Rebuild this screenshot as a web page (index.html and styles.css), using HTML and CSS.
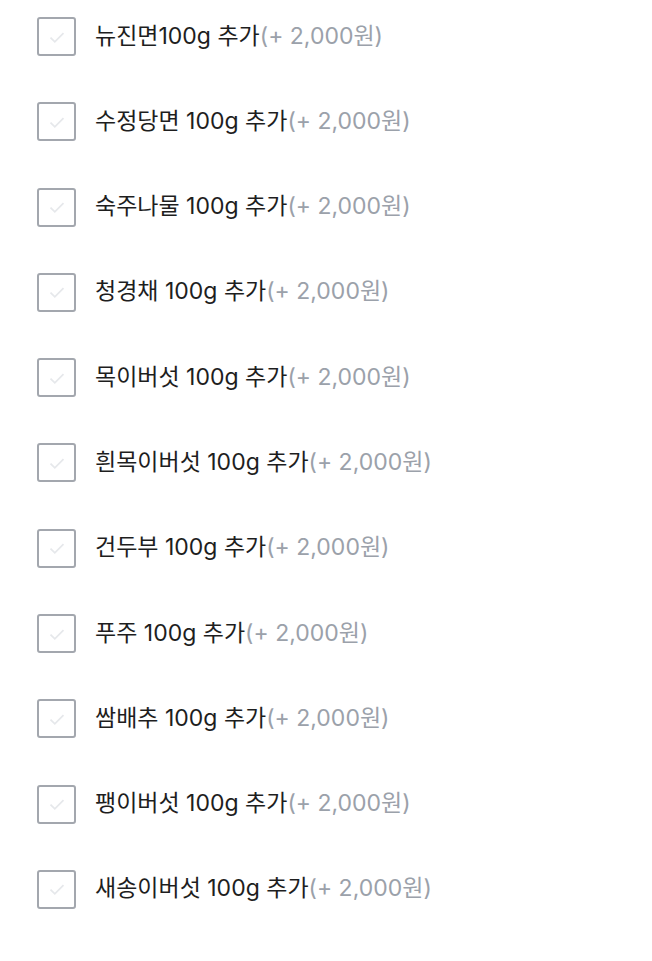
FILE: index.html
```html
<!DOCTYPE html>
<html lang="ko">
<head>
    <meta charset="UTF-8">
    <meta name="viewport" content="width=device-width, initial-scale=1.0">
    <title>추가 옵션</title>
    <link rel="stylesheet" href="styles.css">
</head>
<body>
    <ul class="option-list">
        <li class="option">
            <span class="check"><svg viewBox="0 0 24 24"><path d="M6 12.5l4 4 8-8"/></svg></span>
            <span class="name">뉴진면100g 추가</span><span class="price">(+ 2,000원)</span>
        </li>
        <li class="option">
            <span class="check"><svg viewBox="0 0 24 24"><path d="M6 12.5l4 4 8-8"/></svg></span>
            <span class="name">수정당면 100g 추가</span><span class="price">(+ 2,000원)</span>
        </li>
        <li class="option">
            <span class="check"><svg viewBox="0 0 24 24"><path d="M6 12.5l4 4 8-8"/></svg></span>
            <span class="name">숙주나물 100g 추가</span><span class="price">(+ 2,000원)</span>
        </li>
        <li class="option">
            <span class="check"><svg viewBox="0 0 24 24"><path d="M6 12.5l4 4 8-8"/></svg></span>
            <span class="name">청경채 100g 추가</span><span class="price">(+ 2,000원)</span>
        </li>
        <li class="option">
            <span class="check"><svg viewBox="0 0 24 24"><path d="M6 12.5l4 4 8-8"/></svg></span>
            <span class="name">목이버섯 100g 추가</span><span class="price">(+ 2,000원)</span>
        </li>
        <li class="option">
            <span class="check"><svg viewBox="0 0 24 24"><path d="M6 12.5l4 4 8-8"/></svg></span>
            <span class="name">흰목이버섯 100g 추가</span><span class="price">(+ 2,000원)</span>
        </li>
        <li class="option">
            <span class="check"><svg viewBox="0 0 24 24"><path d="M6 12.5l4 4 8-8"/></svg></span>
            <span class="name">건두부 100g 추가</span><span class="price">(+ 2,000원)</span>
        </li>
        <li class="option">
            <span class="check"><svg viewBox="0 0 24 24"><path d="M6 12.5l4 4 8-8"/></svg></span>
            <span class="name">푸주 100g 추가</span><span class="price">(+ 2,000원)</span>
        </li>
        <li class="option">
            <span class="check"><svg viewBox="0 0 24 24"><path d="M6 12.5l4 4 8-8"/></svg></span>
            <span class="name">쌈배추 100g 추가</span><span class="price">(+ 2,000원)</span>
        </li>
        <li class="option">
            <span class="check"><svg viewBox="0 0 24 24"><path d="M6 12.5l4 4 8-8"/></svg></span>
            <span class="name">팽이버섯 100g 추가</span><span class="price">(+ 2,000원)</span>
        </li>
        <li class="option">
            <span class="check"><svg viewBox="0 0 24 24"><path d="M6 12.5l4 4 8-8"/></svg></span>
            <span class="name">새송이버섯 100g 추가</span><span class="price">(+ 2,000원)</span>
        </li>
    </ul>
</body>
</html>
```

FILE: styles.css
```css
body {
    margin: 0;
    padding: 0;
    background: #fff;
    font-family: Inter, "Noto Sans CJK KR", sans-serif;
}

.option-list {
    list-style: none;
    margin: 0;
    padding: 17px 0 0 37px;
    display: flex;
    flex-direction: column;
    gap: 46.3px;
}

.option {
    display: flex;
    align-items: center;
    height: 39px;
}

.check {
    box-sizing: border-box;
    width: 39px;
    height: 39px;
    border: 2px solid #a3a7ae;
    border-radius: 3px;
    display: flex;
    align-items: center;
    justify-content: center;
    margin-right: 19px;
    flex-shrink: 0;
}

.check svg {
    width: 26px;
    height: 26px;
    fill: none;
    stroke: #e6e8eb;
    stroke-width: 1.6;
}

.name,
.price {
    font-size: 23px;
    line-height: 1;
    margin-top: -1px;
}

.name {
    color: #1e1e1e;
}

.price {
    color: #9ba1aa;
}
```
